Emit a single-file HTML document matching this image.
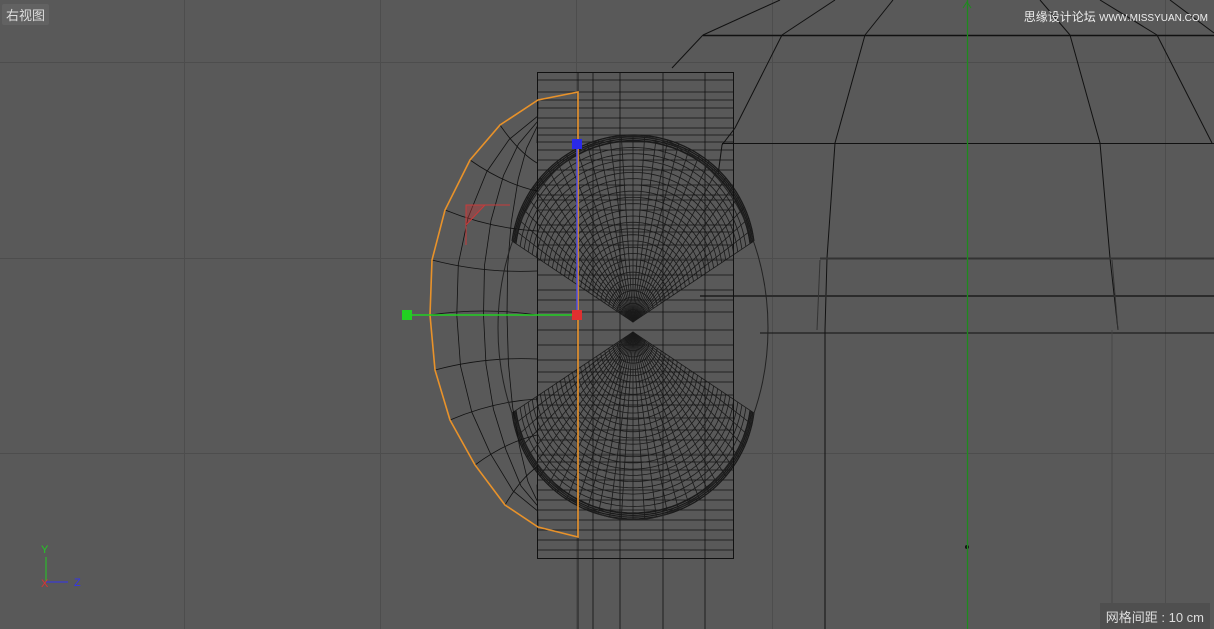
<!DOCTYPE html><html><head><meta charset="utf-8"><style>
html,body{margin:0;padding:0;background:#595959;overflow:hidden}
#c{position:relative;width:1214px;height:629px;font-family:"Liberation Sans","Noto Sans CJK SC",sans-serif}
.lbl{position:absolute;left:2px;top:4px;background:#626262;color:#ddd;font-size:13px;padding:1px 4px;border-radius:2px}
.wm{position:absolute;right:6px;top:8px;color:#eee;font-size:12px;letter-spacing:0}
.gs{position:absolute;right:4px;bottom:0;background:#4f4f4f;color:#ddd;font-size:13px;padding:4px 6px 3px 6px}
</style></head><body><div id="c">
<svg width="1214" height="629" style="position:absolute;left:0;top:0">
<g stroke="#4d4d4d" stroke-width="1">
<line x1="184.5" y1="0" x2="184.5" y2="629"/><line x1="380.5" y1="0" x2="380.5" y2="629"/><line x1="576.5" y1="0" x2="576.5" y2="629"/><line x1="772.5" y1="0" x2="772.5" y2="629"/><line x1="1165.5" y1="0" x2="1165.5" y2="629"/>
<line x1="0" y1="62.5" x2="1214" y2="62.5"/><line x1="0" y1="258.5" x2="1214" y2="258.5"/><line x1="0" y1="453.5" x2="1214" y2="453.5"/>
</g>
<g stroke="#111" stroke-width="1" fill="none">
<line x1="703" y1="35.5" x2="1214" y2="35.5" stroke-width="1.5"/>
<polyline points="703,35 780,0"/><polyline points="782,35 835,0"/><polyline points="865,35 893,0"/><polyline points="1070,35 1040,0"/><polyline points="1157,35 1100,0"/><polyline points="1214,33 1170,0"/>
<polyline points="703,35 672,68"/>
<polyline points="782,35 735,128 722,145 718,175"/>
<polyline points="865,35 835,143 827,258 825,330 825,629"/>
<polyline points="1070,35 1100,143 1110,258 1118,330"/>
<polyline points="1157,35 1212,143"/>
<line x1="722" y1="143.5" x2="1214" y2="143.5"/>
<line x1="820" y1="258.5" x2="1214" y2="258.5" stroke="#333" stroke-width="2"/>
<line x1="700" y1="296" x2="1214" y2="296" stroke="#2b2b2b" stroke-width="2"/>
<line x1="760" y1="333" x2="1214" y2="333"/>
<line x1="820" y1="260" x2="817" y2="330" stroke="#333"/><line x1="1112" y1="260" x2="1118" y2="330" stroke="#333"/>
<line x1="1112" y1="330" x2="1112" y2="629" stroke="#444" stroke-width="0.8"/>
<circle cx="967" cy="547" r="1.5" fill="#111"/>
</g>
<line x1="967.5" y1="0" x2="967.5" y2="629" stroke="#1e8a1e" stroke-width="1.3"/>
<path d="M963,8 L967,2 L971,8" stroke="#1e8a1e" fill="none"/>
<g id="mesh" stroke="#1a1a1a" stroke-width="0.8" fill="none"></g>
<g stroke="#111" stroke-width="1" fill="none">
<rect x="537.5" y="72.5" width="196" height="486"/>
<ellipse cx="633" cy="328" rx="135" ry="192" stroke="#222"/>
</g>
<polygon points="578,92 538,100 500,125 470,160 445,210 432,260 430,315 435,370 450,420 475,465 505,505 538,527 578,537" fill="none" stroke="#e8922a" stroke-width="1.6"/>
<path d="M466,205 L466,245 M466,205 L510,205 M466,205 L466,225 L485,205 Z" stroke="#c83a3a" fill="rgba(200,60,60,0.4)"/>
<line x1="407" y1="315" x2="577" y2="315" stroke="#22d022" stroke-width="1.5"/>
<line x1="577" y1="145" x2="577" y2="315" stroke="#5050e8" stroke-width="1.5"/>
<rect x="402" y="310" width="10" height="10" fill="#22d022"/>
<rect x="572" y="139" width="10" height="10" fill="#2a2ae8"/>
<rect x="572" y="310" width="10" height="10" fill="#e03030"/>
<g font-family="Liberation Sans" font-size="11">
<line x1="46" y1="557" x2="46" y2="582" stroke="#2c2"/><line x1="46" y1="582" x2="68" y2="582" stroke="#33e"/>
<text x="41" y="553" fill="#2c2">Y</text><text x="74" y="586" fill="#33e">Z</text><text x="41" y="587" fill="#d33">X</text>
</g>
</svg>
<div class="lbl">右视图</div>
<div class="wm">思缘设计论坛 <span style="font-size:10px">WWW.MISSYUAN.COM</span></div>
<div class="gs">网格间距 : 10 cm</div>
</div>
<script>
var g=document.getElementById('mesh'),h='';
[80,92,100,108,118,128,135,142,150,160,170,185,195,200,210,225,232,245,260,275,290,300,312,330,345,360,372,382,395,405,418,430,440,455,462,470,480,490,500,510,520,530,540,550].forEach(function(y){h+='<line x1="537" y1="'+y+'" x2="733" y2="'+y+'" stroke="#111"/>';});
[578,593,620,663,705].forEach(function(x){h+='<line x1="'+x+'" y1="72" x2="'+x+'" y2="629" stroke="#111"/>';});
function fan(ay,cy,r,dir){var ax=633,N=60,pts=[];var a0=Math.atan2(120,-(dir*(cy-ay)>0?0:0));
 // outer arc points: circle centre (633,cy) radius r, between angles
 var half=Math.asin(120/r)+0.05;
 for(var i=0;i<=N;i++){var t=-half+2*half*i/N;pts.push([ax+r*Math.sin(t),cy-dir*r*Math.cos(t)]);}
 for(var i=0;i<=N;i+=2)h+='<line x1="'+ax+'" y1="'+ay+'" x2="'+pts[i][0]+'" y2="'+pts[i][1]+'"/>';
 for(var k=1;k<=30;k++){var s=k/30,d='M';pts.forEach(function(p,j){d+=(j?' L':'')+(ax+(p[0]-ax)*s).toFixed(1)+','+(ay+(p[1]-ay)*s).toFixed(1);});h+='<path d="'+d+'"/>';}
 for(var k=0;k<4;k++){var s=0.97+k*0.01,d='M';pts.forEach(function(p,j){d+=(j?' L':'')+(ax+(p[0]-ax)*s).toFixed(1)+','+(ay+(p[1]-ay)*s).toFixed(1);});h+='<path d="'+d+'" stroke-width="1.3"/>';}
}
fan(322,257,122,1);fan(332,397,122,-1);
var op=[[538,100],[500,125],[470,160],[445,210],[432,260],[430,315],[435,370],[450,420],[475,465],[505,505],[538,527]];
op.forEach(function(p){var ty=315+(p[1]-315)*0.8;h+='<path d="M'+p[0]+','+p[1]+' Q'+((p[0]+537)/2)+','+((p[1]+ty)/2+ (p[1]<315?8:-8))+' 537,'+ty.toFixed(1)+'" stroke="#111"/>';});
[0.75,0.5,0.28].forEach(function(s){var d='M';op.forEach(function(p,j){var y=315+(p[1]-315)*(0.85+0.1*s);d+=(j?' L':'')+(537-(537-p[0])*s).toFixed(1)+','+y.toFixed(1);});h+='<path d="'+d+'" stroke="#111"/>';});
g.innerHTML=h;
</script>
</body></html>
